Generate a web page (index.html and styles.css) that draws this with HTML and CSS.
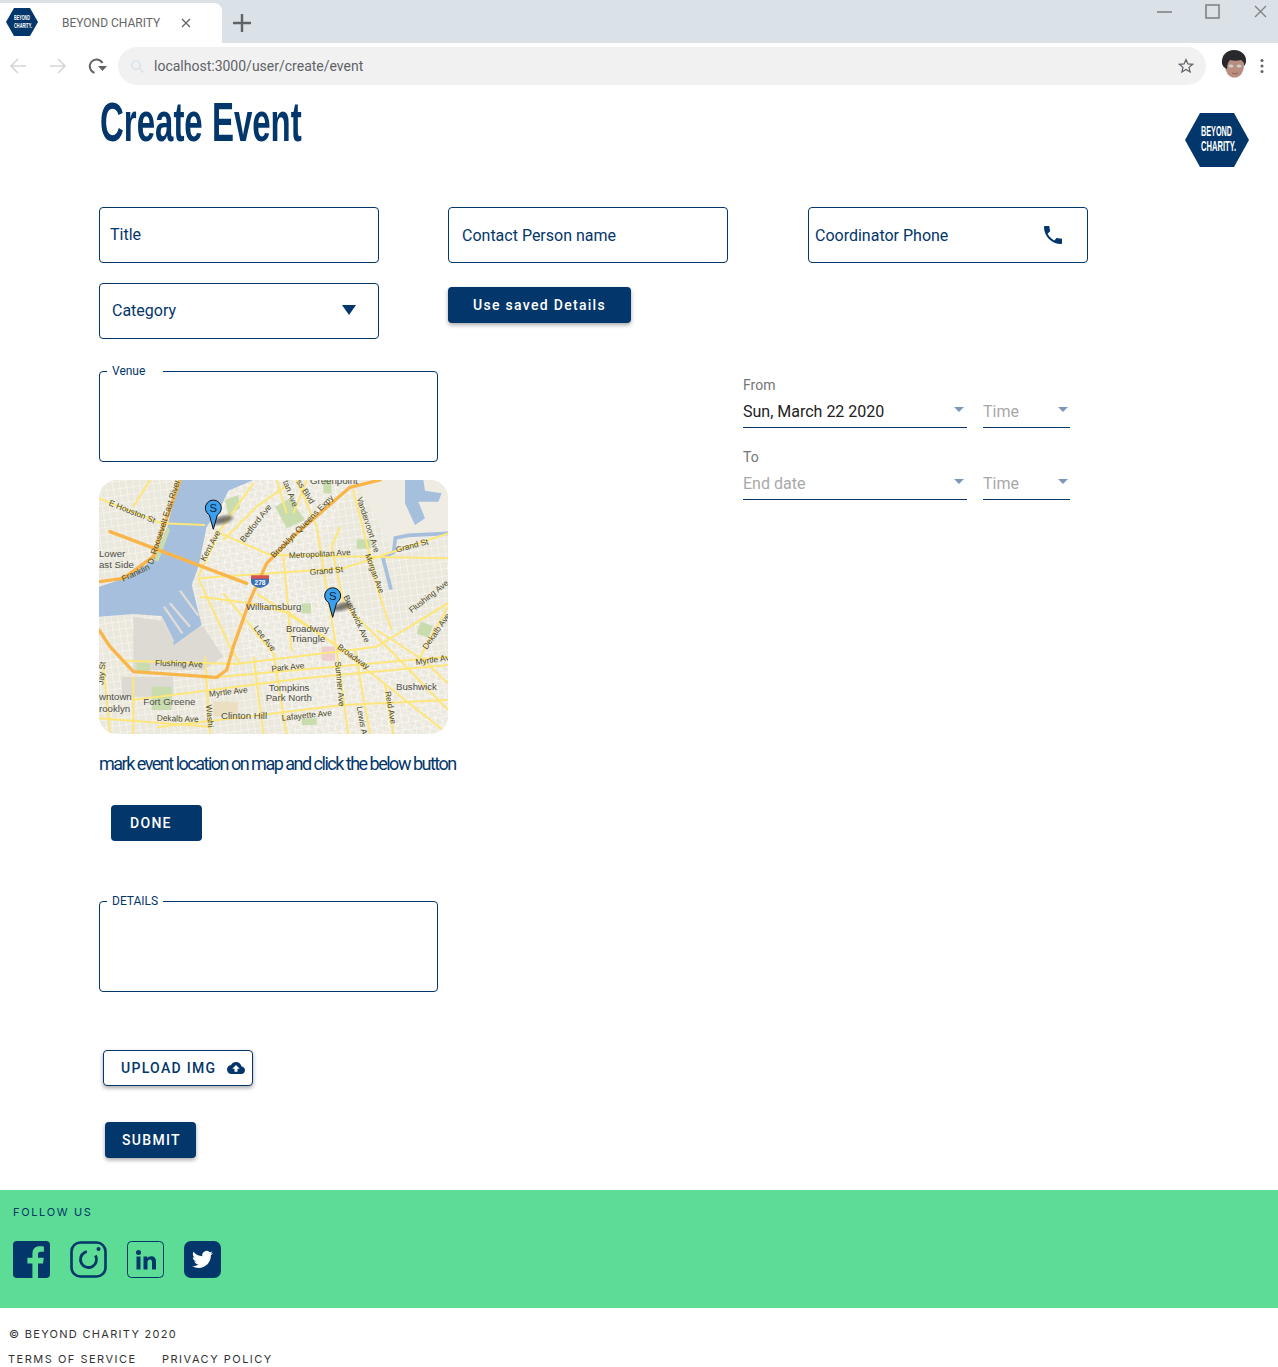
FILE: index.html
```html
<!DOCTYPE html>
<html lang="en">
<head>
<meta charset="utf-8">
<title>BEYOND CHARITY</title>
<link rel="stylesheet" href="styles.css">
</head>
<body>
<div class="chrome">
  <div class="tabstrip">
    <div class="tab">
      <svg class="favicon" viewBox="0 0 32 28"><polygon points="0,14 8,0 24,0 32,14 24,28 8,28" fill="#03366a"/><text x="8" y="12" class="hex-text-s" textLength="16" lengthAdjust="spacingAndGlyphs">BEYOND</text><text x="8" y="20" class="hex-text-s" textLength="18" lengthAdjust="spacingAndGlyphs">CHARITY.</text></svg>
      <span class="tab-title">BEYOND CHARITY</span>
      <svg class="tab-close" viewBox="0 0 10 10"><path d="M1 1l8 8M9 1l-8 8" stroke="#5f6368" stroke-width="1.3" fill="none"/></svg>
    </div>
    <svg class="new-tab" viewBox="0 0 18 18"><path d="M9 0v18M0 9h18" stroke="#5f6368" stroke-width="2.4" fill="none"/></svg>
    <div class="window-controls">
      <svg class="win-icon" viewBox="0 0 16 16"><path d="M0 8h15" stroke="#808487" stroke-width="1.6"/></svg>
      <svg class="win-icon" viewBox="0 0 16 16"><rect x="1" y="1" width="13" height="13" fill="none" stroke="#808487" stroke-width="1.6"/></svg>
      <svg class="win-icon" viewBox="0 0 16 16"><path d="M2 2l11 11M13 2L2 13" stroke="#808487" stroke-width="1.4" fill="none"/></svg>
    </div>
  </div>
  <div class="toolbar">
    <svg class="nav-icon" viewBox="0 0 16 16"><path d="M16 8H1.5M8 1L1 8l7 7" stroke="#d4d6d8" stroke-width="1.6" fill="none"/></svg>
    <svg class="nav-icon" viewBox="0 0 16 16"><path d="M0 8h14.5M8 1l7 7-7 7" stroke="#d4d6d8" stroke-width="1.6" fill="none"/></svg>
    <svg class="nav-icon reload" viewBox="0 0 20 16"><path d="M15.500 5A6.800 6.800 0 1 0 7.500 14.800" stroke="#5f6368" stroke-width="1.9" fill="none"/><path d="M11 8h9l-4.500 5z" fill="#5f6368"/></svg>
    <div class="omnibox">
      <svg class="omni-search" viewBox="0 0 16 16"><circle cx="6.500" cy="6.500" r="4.500" stroke="#d5e2e8" stroke-width="1.500" fill="none"/><path d="M10 10l4.500 4.500" stroke="#d5e2e8" stroke-width="1.500"/></svg>
      <span class="url">localhost:3000/user/create/event</span>
      <svg class="star" viewBox="0 0 16 16"><path d="M8 1.500l1.900 4.400 4.700.4-3.600 3.100 1.100 4.600L8 11.500l-4.100 2.500L5 9.400 1.400 6.300l4.700-.4z" stroke="#5f6368" stroke-width="1.200" fill="none"/></svg>
    </div>
    <svg class="avatar" viewBox="0 0 26 28">
      <ellipse cx="13.500" cy="16" rx="9.500" ry="11.500" fill="#b88e80"/>
      <path d="M1 14C0 5 6 0 13 0c8 0 13 6 12 12-.5 2-1 3-2 4 0-3-1-5-3-6-4 1-7 1-11 0-2 2-3 5-3 9-3-1-4-3-5-5z" fill="#29282c"/>
      <ellipse cx="10" cy="16" rx="2.400" ry="1.500" fill="#cfd0cf"/><ellipse cx="18" cy="16" rx="2.400" ry="1.500" fill="#cfd0cf"/>
      <path d="M11 23c2 1 4 1 6 0" stroke="#8d5c50" stroke-width="1" fill="none"/>
    </svg>
    <svg class="dots" viewBox="0 0 4 16"><circle cx="2" cy="2.500" r="1.500" fill="#5f6368"/><circle cx="2" cy="8" r="1.500" fill="#5f6368"/><circle cx="2" cy="13.500" r="1.500" fill="#5f6368"/></svg>
  </div>
</div>

<main class="page">
  <header class="page-head">
    <h1 class="page-title">Create Event</h1>
    <svg class="logo" viewBox="0 0 64 54"><polygon points="0,27 15,0 49,0 64,27 49,54 15,54" fill="#03366a"/><text x="16" y="23" class="hex-text" textLength="31" lengthAdjust="spacingAndGlyphs">BEYOND</text><text x="16" y="38" class="hex-text" textLength="35" lengthAdjust="spacingAndGlyphs">CHARITY.</text></svg>
  </header>

  <section class="fields">
    <div class="field field-title">Title</div>
    <div class="field field-contact">Contact Person name</div>
    <div class="field field-phone">Coordinator Phone
      <svg class="phone-icon" viewBox="0 0 24 24"><path fill="#03366a" d="M6.620 10.790c1.440 2.830 3.760 5.140 6.590 6.590l2.200-2.200c.27-.27.67-.36 1.020-.24 1.120.37 2.330.57 3.570.57.55 0 1 .45 1 1V20c0 .55-.45 1-1 1-9.390 0-17-7.610-17-17 0-.55.45-1 1-1h3.500c.55 0 1 .45 1 1 0 1.250.2 2.450.57 3.570.11.35.03.74-.25 1.020l-2.200 2.200z"/></svg>
    </div>
    <div class="field field-category">Category<span class="select-arrow"></span></div>
    <div class="saved-cell"><button class="btn btn-saved" type="button">Use saved Details</button></div>
  </section>

  <section class="lower">
    <div class="left-col">
      <fieldset class="outline-box"><legend class="outline-legend venue-legend">Venue</legend></fieldset>
      <svg class="map" viewBox="27 30 1047 762" role="img" aria-label="Map of Williamsburg, Brooklyn">
        <defs>
          <pattern id="gridA" width="20" height="22" patternUnits="userSpaceOnUse" patternTransform="rotate(-8)"><path d="M0 0H20M0 0V22" stroke="#fff" stroke-width="2.400" fill="none"/></pattern>
          <pattern id="gridB" width="24" height="17" patternUnits="userSpaceOnUse" patternTransform="rotate(24)"><path d="M0 0H24M0 0V17" stroke="#fff" stroke-width="2.200" fill="none"/></pattern>
          <filter id="blur"><feGaussianBlur stdDeviation="5"/></filter>
        </defs>
        <rect x="27" y="30" width="1047" height="762" fill="#ebe8dd"/>
        <rect x="27" y="30" width="1047" height="762" fill="url(#gridA)"/>
        <polygon points="340,30 800,30 620,330 1074,560 1074,792 600,792 450,500 340,300" fill="url(#gridB)"/>
        <polygon points="800,30 1074,30 1074,200 900,230" fill="#efece4"/>
        <polygon points="130,440 340,470 400,560 340,600 130,600" fill="#dddad3"/>
        <polygon points="95,620 250,620 250,680 95,680" fill="#dddad3"/>
        <polygon points="265,30 490,30 415,62 395,105 350,170 325,290 305,345 335,465 252,525 215,438 130,432 27,440 27,350 105,325 190,270 232,170" fill="#a5bfdd"/>
        <path d="M240,400l60,70M222,410l55,80M270,362l55,75M215,445l35,70" stroke="#e0ddd7" stroke-width="7" fill="none"/>
        <polygon points="945,30 1000,30 1005,62 1055,70 1045,95 985,95 1005,145 975,165 945,100" fill="#a5bfdd"/>
        <path d="M1074,190l-120,6-38,8-5,42-32,18 24,95" stroke="#a5bfdd" stroke-width="11" fill="none"/>
        <g fill="#c8dcae">
          <polygon points="405,90 445,75 450,115 415,135"/>
          <polygon points="555,110 600,85 645,150 590,175"/>
          <rect x="800" y="208" width="42" height="28"/>
          <rect x="985" y="460" width="38" height="38" transform="rotate(20 1004 479)"/>
          <rect x="635" y="400" width="28" height="30"/>
          <rect x="140" y="578" width="40" height="28"/>
          <rect x="185" y="650" width="60" height="70"/>
          <rect x="635" y="745" width="45" height="20"/>
          <rect x="700" y="30" width="24" height="40"/>
          <polygon points="190,270 232,170 240,180 205,275"/>
        </g>
        <rect x="695" y="530" width="40" height="42" fill="#eecfd0"/>
        <rect x="370" y="695" width="75" height="45" fill="#eadfc0"/>
        <g class="roads">
          <path d="M27,85L215,160 345,165"/><path d="M130,110L180,30"/><path d="M325,320L390,180 490,40"/>
          <path d="M400,210L500,110 585,50"/><path d="M390,190L540,255 1074,265"/><path d="M325,325L760,295 880,255 1074,190"/>
          <path d="M790,60L870,380 905,480"/><path d="M620,30L680,170 740,540 775,792"/><path d="M400,370L550,550 590,792"/>
          <path d="M100,572L440,582 860,530 1074,400"/><path d="M340,625L1074,560"/><path d="M130,690L640,625 1074,585"/>
          <path d="M200,772L760,705 1074,690"/><path d="M500,370L730,520 1074,792"/><path d="M750,170L725,230 760,400 900,540 1074,720"/>
          <path d="M27,745L360,770"/><path d="M345,560L360,792"/><path d="M885,640L910,792"/><path d="M990,560L1074,410"/>
          <path d="M330,380L480,400 600,430 730,520"/><path d="M560,30L590,130"/>
          <path d="M325,325L420,530 450,580"/><path d="M580,250L605,545"/><path d="M860,480L1000,570 1074,640"/><path d="M490,560L520,792"/>
          <path d="M795,540L840,792"/><path d="M40,580L60,792"/><path d="M650,30L610,130"/><path d="M130,620L130,792"/><path d="M1074,400L990,450"/>
        </g>
        <g class="highways">
          <path d="M60,185L470,340"/>
          <path d="M870,30L780,52 620,190 530,280 480,390 430,530 410,600 380,622 130,605 60,530 27,480"/>
          <path d="M27,335L100,325 190,260 270,30"/>
        </g>
        <path d="M483,316h54v12h-54z" fill="#d9534f"/>
        <path d="M483,326h54v8c0,12-12,16-27,20-15-4-27-8-27-20z" fill="#3d72b5"/>
        <text x="510" y="345" class="shield">278</text>
        <g class="map-label">
          <text x="55" y="105" transform="rotate(22 55 105)" class="road-l">E Houston St</text>
          <text x="188" y="285" transform="rotate(-72 188 285)" class="road-l">D. Roosevelt East River</text>
          <text x="100" y="335" transform="rotate(-25 100 335)" class="road-l">Franklin</text>
          <text x="345" y="275" transform="rotate(-62 345 275)" class="road-l">Kent Ave</text>
          <text x="462" y="218" transform="rotate(-52 462 218)" class="road-l">Bedford Ave</text>
          <text x="552" y="265" transform="rotate(-45 552 265)" class="road-l">Brooklyn Queens Expy</text>
          <text x="597" y="265" transform="rotate(-3 597 265)" class="road-l">Metropolitan Ave</text>
          <text x="660" y="315" transform="rotate(-5 660 315)" class="road-l">Grand St</text>
          <text x="920" y="248" transform="rotate(-15 920 248)" class="road-l">Grand St</text>
          <text x="578" y="35" transform="rotate(68 578 35)" class="road-l">tan Ave</text>
          <text x="618" y="35" transform="rotate(58 618 35)" class="road-l">ss Blvd</text>
          <text x="800" y="85" transform="rotate(72 800 85)" class="road-l" textLength="172" lengthAdjust="spacingAndGlyphs">Vandervoort Ave</text>
          <text x="825" y="255" transform="rotate(70 825 255)" class="road-l" textLength="124" lengthAdjust="spacingAndGlyphs">Morgan Ave</text>
          <text x="965" y="430" transform="rotate(-38 965 430)" class="road-l">Flushing Ave</text>
          <text x="760" y="380" transform="rotate(65 760 380)" class="road-l">Bushwick Ave</text>
          <text x="490" y="475" transform="rotate(52 490 475)" class="road-l">Lee Ave</text>
          <text x="740" y="535" transform="rotate(35 740 535)" class="road-l">Broadway</text>
          <text x="195" y="587" transform="rotate(2 195 587)" class="road-l">Flushing Ave</text>
          <text x="545" y="605" transform="rotate(-6 545 605)" class="road-l">Park Ave</text>
          <text x="358" y="680" transform="rotate(-6 358 680)" class="road-l">Myrtle Ave</text>
          <text x="200" y="752" transform="rotate(2 200 752)" class="road-l">Dekalb Ave</text>
          <text x="576" y="752" transform="rotate(-6 576 752)" class="road-l">Lafayette Ave</text>
          <text x="735" y="575" transform="rotate(85 735 575)" class="road-l">Sumner Ave</text>
          <text x="800" y="710" transform="rotate(80 800 710)" class="road-l">Lewis Ave</text>
          <text x="885" y="665" transform="rotate(80 885 665)" class="road-l">Reid Ave</text>
          <text x="978" y="585" transform="rotate(-8 978 585)" class="road-l">Myrtle Ave</text>
          <text x="1010" y="540" transform="rotate(-55 1010 540)" class="road-l">Dekalb Ave</text>
          <text x="348" y="705" transform="rotate(85 348 705)" class="road-l">Washi</text>
          <text x="40" y="645" transform="rotate(-85 40 645)" class="road-l">Jay St</text>
          <text x="660" y="42">Greenpoint</text>
          <text x="27" y="260">Lower</text>
          <text x="27" y="294">ast Side</text>
          <text x="468" y="420">Williamsburg</text>
          <text x="588" y="485">Broadway</text>
          <text x="602" y="517">Triangle</text>
          <text x="536" y="662">Tompkins</text>
          <text x="527" y="692">Park North</text>
          <text x="918" y="660">Bushwick</text>
          <text x="27" y="690">wntown</text>
          <text x="27" y="725">rooklyn</text>
          <text x="160" y="706">Fort Greene</text>
          <text x="393" y="747">Clinton Hill</text>
        </g>
        <g class="pin">
          <ellipse cx="398" cy="150" rx="32" ry="11" transform="rotate(-15 398 150)" fill="#333" opacity=".65" filter="url(#blur)"/>
          <path d="M370,178L358,135A24,24 0 1 1 382,135Z" fill="#3aa0ee" stroke="#111" stroke-width="3"/>
          <text x="370" y="126" class="pin-s">S</text>
        </g>
        <g class="pin">
          <ellipse cx="757" cy="410" rx="30" ry="11" transform="rotate(-15 757 410)" fill="#333" opacity=".65" filter="url(#blur)"/>
          <path d="M728,442L716,398A24,24 0 1 1 740,398Z" fill="#3aa0ee" stroke="#111" stroke-width="3"/>
          <text x="728" y="390" class="pin-s">S</text>
        </g>
      </svg>
      <p class="hint">mark event location on map and click the below button</p>
      <button class="btn btn-done" type="button">DONE</button>
      <fieldset class="outline-box details-box"><legend class="outline-legend">DETAILS</legend></fieldset>
      <button class="btn-upload" type="button">UPLOAD IMG
        <svg class="upload-icon" viewBox="0 0 24 24"><path fill="#03366a" d="M19.350 10.040C18.670 6.590 15.640 4 12 4 9.110 4 6.600 5.640 5.350 8.040 2.340 8.360 0 10.910 0 14c0 3.310 2.690 6 6 6h13c2.760 0 5-2.240 5-5 0-2.640-2.050-4.780-4.650-4.960zM14 13v4h-4v-4H7l5-5 5 5h-3z"/></svg>
      </button>
      <button class="btn btn-submit" type="button">SUBMIT</button>
    </div>
    <div class="right-col">
      <div class="date-label">From</div>
      <div class="date-row">
        <div class="picker picker-date picker-filled">Sun, March 22 2020<span class="caret"></span></div>
        <div class="picker picker-time">Time<span class="caret"></span></div>
      </div>
      <div class="date-label date-label-to">To</div>
      <div class="date-row">
        <div class="picker picker-date">End date<span class="caret"></span></div>
        <div class="picker picker-time">Time<span class="caret"></span></div>
      </div>
    </div>
  </section>
</main>

<footer class="footer">
  <div class="social">
    <div class="follow">FOLLOW US</div>
    <div class="social-icons">
      <svg class="social-icon" viewBox="0 0 37 37"><rect width="37" height="37" rx="4" fill="#03366a"/><path d="M25 37V22.500h5l.8-5.800H25v-3.200c0-1.700.6-2.800 2.900-2.800h3V5.600c-.6-.1-2.300-.3-4.300-.3-4.300 0-7.200 2.600-7.200 7.400v4H14.400v5.800h5V37z" fill="#5cdc94"/></svg>
      <svg class="social-icon" viewBox="0 0 37 37"><rect x="1.500" y="1.500" width="34" height="34" rx="9" fill="none" stroke="#03366a" stroke-width="2.600"/><circle cx="18.500" cy="18.500" r="8" fill="none" stroke="#03366a" stroke-width="2.800" stroke-dasharray="40 10" transform="rotate(-30 18.500 18.500)"/><circle cx="28.500" cy="8" r="2" fill="#03366a"/></svg>
      <svg class="social-icon" viewBox="0 0 37 37"><rect x=".5" y=".5" width="36" height="36" rx="4" fill="none" stroke="#03366a"/><circle cx="11.500" cy="11.500" r="2.500" fill="#03366a"/><rect x="9.500" y="15.500" width="4" height="13" fill="#03366a"/><path d="M16.500 15.500h3.800v1.800c.8-1.300 2.300-2.100 4-2.100 3.200 0 4.700 2 4.700 5.300v8h-4v-7.300c0-1.700-.7-2.600-2-2.600-1.500 0-2.500 1-2.500 2.700v7.200h-4z" fill="#03366a"/></svg>
      <svg class="social-icon" viewBox="0 0 37 37"><rect width="37" height="37" rx="7" fill="#03366a"/><g transform="translate(8 8) scale(.875)"><path fill="#fff" d="M23.953 4.570a10 10 0 01-2.825.775 4.958 4.958 0 002.163-2.723c-.951.555-2.005.959-3.127 1.184a4.920 4.920 0 00-8.384 4.482C7.690 8.095 4.067 6.130 1.640 3.162a4.822 4.822 0 00-.666 2.475c0 1.710.870 3.213 2.188 4.096a4.904 4.904 0 01-2.228-.616v.060a4.923 4.923 0 003.946 4.827 4.996 4.996 0 01-2.212.085 4.936 4.936 0 004.604 3.417 9.867 9.867 0 01-6.102 2.105c-.390 0-.779-.023-1.170-.067a13.995 13.995 0 007.557 2.209c9.053 0 13.998-7.496 13.998-13.985 0-.210 0-.420-.015-.630A9.935 9.935 0 0024 4.590z"/></g></svg>
    </div>
  </div>
  <div class="legal">
    <div class="copyright">© BEYOND CHARITY 2020</div>
    <div class="legal-links"><span class="terms">TERMS OF SERVICE</span><span>PRIVACY POLICY</span></div>
  </div>
</footer>
</body>
</html>
```
FILE: styles.css
```css
* { box-sizing: border-box; }
html, body { margin: 0; padding: 0; }
body {
  height: 1367px;
  overflow: hidden;
  background: #fff;
  color: #03366a;
  font-family: Roboto, "Liberation Sans", sans-serif;
}

/* browser chrome */
.chrome { height: 96px; }
.tabstrip {
  height: 43px;
  background: #dae1e7;
  display: flex;
  align-items: flex-end;
  position: relative;
}
.tab {
  width: 222px;
  height: 40px;
  background: #fff;
  border-radius: 0 8px 0 0;
  display: flex;
  align-items: center;
  padding: 0 0 0 6px;
  margin-top: 3px;
}
.favicon { width: 32px; height: 28px; flex: none; margin-top: -3px; }
.hex-text-s {
  font: bold 7px "Liberation Sans", sans-serif;
  fill: #fff;
}
.tab-title { margin-left: 24px; font-size: 12px; color: #666; width: 119px; white-space: nowrap; }
.tab-close { width: 10px; height: 10px; }
.new-tab { width: 18px; height: 18px; margin: 0 0 11px 11px; }
.window-controls { margin-left: auto; display: flex; gap: 32px; align-self: flex-start; padding: 4px 9px 0 0; }
.win-icon { width: 16px; height: 16px; }

.toolbar { height: 53px; display: flex; align-items: flex-start; padding-top: 4px; }
.nav-icon { width: 16px; height: 16px; margin: 11px 0 0 10px; flex: none; }
.nav-icon + .nav-icon { margin-left: 24px; }
.nav-icon.reload { width: 20px; margin-left: 21px; }
.omnibox {
  width: 1088px;
  height: 38px;
  margin-left: 11px;
  border-radius: 19px;
  background: #f1f1f1;
  display: flex;
  align-items: center;
  padding: 0 12px;
}
.omni-search { width: 15px; height: 15px; flex: none; }
.url { margin-left: 9px; font-size: 14px; color: #5f6368; }
.star { width: 16px; height: 16px; margin-left: auto; }
.avatar { width: 26px; height: 28px; margin: 3px 0 0 15px; flex: none; }
.dots { width: 4px; height: 16px; margin: 11px 0 0 13px; flex: none; }

/* page */
.page-head {
  height: 111px;
  padding: 0 29px 0 99px;
  display: flex;
  justify-content: space-between;
  align-items: flex-start;
}
.page-title {
  margin: -6px 0 0 1px;
  font: 700 55px/64px "Liberation Sans", sans-serif;
  color: #03366a;
  white-space: nowrap;
  transform: scaleX(.6);
  transform-origin: left top;
}
.logo { width: 64px; height: 54px; margin-top: 17px; }
.hex-text {
  font: bold 14px "Liberation Sans", sans-serif;
  fill: #fff;
}

.fields {
  display: grid;
  grid-template-columns: 349px 360px 280px;
  grid-auto-rows: 56px;
  row-gap: 20px;
  padding-left: 99px;
}
.field {
  width: 280px;
  border: 1px solid #03366a;
  border-radius: 4px;
  display: flex;
  align-items: center;
  font-size: 16px;
  color: #03366a;
}
.field-title { padding: 0 0 2px 10px; }
.field-contact { padding-left: 13px; }
.field-phone { padding-left: 6px; }
.field-category { padding: 0 0 2px 12px; }
.phone-icon { width: 24px; height: 24px; margin-left: auto; margin-right: 22px; }
.select-arrow {
  margin-left: auto;
  margin-right: 22px;
  width: 0;
  height: 0;
  border-left: 7.500px solid transparent;
  border-right: 7.500px solid transparent;
  border-top: 10px solid #03366a;
}
.saved-cell { padding-top: 4px; }

.btn {
  display: block;
  height: 36px;
  border: 0;
  border-radius: 4px;
  background: #03366a;
  color: #fff;
  font: 500 14px Roboto, "Liberation Sans", sans-serif;
  padding: 0;
}
.btn-saved {
  width: 183px;
  letter-spacing: 1.300px;
  box-shadow: 0 2px 4px rgba(0,0,0,.35);
}

.lower {
  display: flex;
  margin-top: 25px;
  padding-left: 99px;
}
.left-col { width: 644px; flex: none; display: flex; flex-direction: column; align-items: flex-start; }
.outline-box {
  width: 339px;
  height: 98px;
  margin: 0;
  padding: 0;
  border: 1px solid #03366a;
  border-radius: 4px;
}
.outline-legend {
  width: 56px;
  margin-left: 7px;
  padding: 0 0 0 5px;
  font-size: 12px;
  line-height: 14px;
  color: #03366a;
}
.map {
  display: block;
  width: 349px;
  height: 254px;
  margin-top: 18px;
  border-radius: 18px;
}
.roads path { fill: none; stroke: #fde67a; stroke-width: 6; stroke-linejoin: round; }
.highways path { fill: none; stroke: #f8b54a; stroke-width: 10; stroke-linejoin: round; stroke-linecap: round; }
.map-label text { font: 29px "Liberation Sans", Arial, sans-serif; fill: #4f4f4a; }
.map-label .road-l { font-size: 25px; fill: #4d4a2a; }
.shield { font: bold 20px "Liberation Sans", Arial, sans-serif; fill: #fff; text-anchor: middle; }
.pin-s { font: 34px "Liberation Sans", Arial, sans-serif; fill: #10202e; text-anchor: middle; }
.hint {
  margin: 18px 0 0;
  font-size: 18px;
  line-height: 24px;
  font-weight: 400;
  letter-spacing: -1.500px;
  color: #03366a;
  white-space: nowrap;
}
.btn-done {
  width: 91px;
  margin: 29px 0 0 12px;
  padding: 0 0 0 19px;
  text-align: left;
  letter-spacing: 1.300px;
}
.details-box { margin-top: 53px; }
.btn-upload {
  width: 150px;
  height: 36px;
  margin: 58px 0 0 4px;
  padding: 0 0 0 17px;
  border: 1px solid #03366a;
  border-radius: 4px;
  background: #fff;
  color: #03366a;
  font: 500 14px Roboto, "Liberation Sans", sans-serif;
  letter-spacing: 1.300px;
  display: flex;
  align-items: center;
  box-shadow: 0 2px 4px rgba(0,0,0,.35);
}
.upload-icon { width: 18px; height: 18px; margin-left: 11px; }
.btn-submit {
  width: 91px;
  margin: 36px 0 0 6px;
  padding-left: 2px;
  letter-spacing: 1.300px;
  box-shadow: 0 2px 4px rgba(0,0,0,.35);
}

.right-col { padding-top: 14px; width: 327px; }
.date-label { font-size: 14px; line-height: 14px; color: #757575; }
.date-label-to { margin-top: 22px; }
.date-row { display: flex; gap: 16px; margin-top: 7px; }
.picker {
  height: 29px;
  border-bottom: 1px solid #03366a;
  font-size: 16px;
  line-height: 24px;
  padding-top: 1px;
  color: #a8a8a8;
  display: flex;
  justify-content: space-between;
}
.picker-filled { color: #212121; }
.picker-date { width: 224px; }
.picker-time { width: 87px; }
.caret {
  margin: 7px 3px 0 0;
  width: 0;
  height: 0;
  border-left: 5px solid transparent;
  border-right: 5px solid transparent;
  border-top: 5px solid #7f9ab8;
}
.picker-time .caret { margin-right: 2px; }

/* footer */
.footer { margin-top: 32px; }
.social { height: 118px; background: #5cdc94; padding: 15px 0 0 13px; }
.follow {
  font: 11px/14px Inter, "Liberation Sans", sans-serif;
  letter-spacing: 1.650px;
  color: #03366a;
}
.social-icons { display: flex; gap: 20px; margin-top: 22px; }
.social-icon { width: 37px; height: 37px; }
.legal {
  padding: 18px 0 0 8px;
  font: 11px/16px Inter, "Liberation Sans", sans-serif;
  letter-spacing: 1.500px;
  color: #333;
}
.copyright { padding-left: 1px; letter-spacing: 1.300px; }
.legal-links { margin-top: 9px; }
.terms { display: inline-block; width: 154px; }
```
